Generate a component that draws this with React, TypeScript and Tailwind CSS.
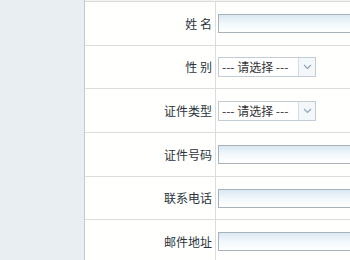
import React from "react";

const font = { fontFamily: '"SimSun","Noto Sans CJK SC","Liberation Sans",sans-serif' };

function TextInput() {
  return (
    <div className="h-[19px] w-[160px] shrink-0 border border-[#a9b2bb] bg-gradient-to-b from-[#d9e8f2] via-[#f2f8fb] to-white" />
  );
}

function Select() {
  return (
    <div className="flex h-[20px] w-[98px] shrink-0 items-center border border-[#c3ccd4] bg-white">
      <span className="flex-1 pl-[3px] text-[12px] leading-none text-[#333]">--- 请选择 ---</span>
      <span className="flex h-full w-[17px] items-center justify-center border-l border-[#d5dde4] bg-[#f4f7fa]">
        <svg width="9" height="6" viewBox="0 0 9 6">
          <path d="M1 1 L4.5 4.5 L8 1" fill="none" stroke="#8ea3b8" strokeWidth="1.2" />
        </svg>
      </span>
    </div>
  );
}

function Row({ label, h, children }: { label: string; h: string; children: React.ReactNode }) {
  return (
    <div className={`flex shrink-0 border-b border-[#dcdcdc] ${h}`}>
      <div className="flex w-[131px] shrink-0 items-center justify-end border-r border-[#dcdcdc] pr-[3px] text-[12px] text-[#2a3440]">
        {label}
      </div>
      <div className="flex flex-1 items-center pl-[2px]">{children}</div>
    </div>
  );
}

export default function App() {
  return (
    <div className="flex h-[260px] w-[350px] overflow-hidden bg-white" style={font}>
      <div className="w-[84px] shrink-0 bg-[#e8eef2]" />
      <div className="w-px shrink-0 bg-[#c4c9ce]" />
      <div className="flex min-w-0 flex-1 flex-col bg-[#fffffd]">
        <div className="h-[2px] shrink-0 border-b border-[#dcdcdc] bg-[#f3f3f3]" />
        <Row label="姓 名" h="h-[44px]"><TextInput /></Row>
        <Row label="性 别" h="h-[43px]"><Select /></Row>
        <Row label="证件类型" h="h-[44px]"><Select /></Row>
        <Row label="证件号码" h="h-[44px]"><TextInput /></Row>
        <Row label="联系电话" h="h-[43px]"><TextInput /></Row>
        <Row label="邮件地址" h="h-[44px]"><TextInput /></Row>
      </div>
    </div>
  );
}
